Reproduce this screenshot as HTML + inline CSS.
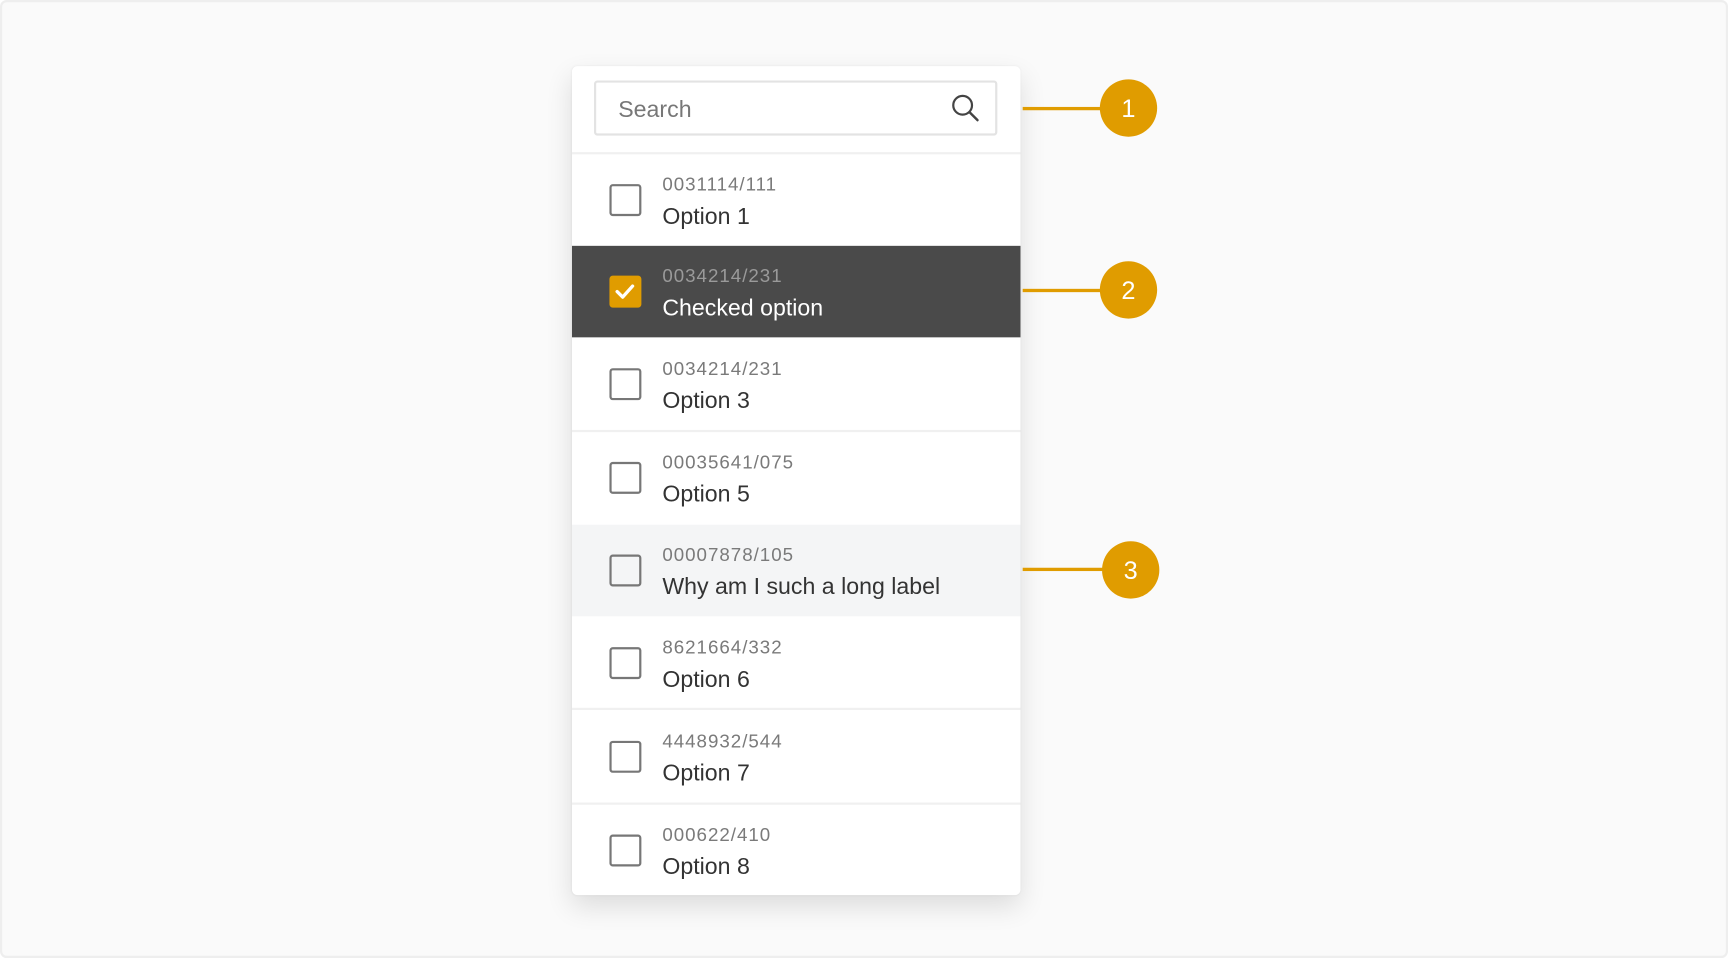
<!DOCTYPE html>
<html><head><meta charset="utf-8"><style>
html,body{margin:0;padding:0;width:1728px;height:958px;overflow:hidden;background:#fff}
#s{position:absolute;left:0;top:0;width:1568px;height:869px;transform:scale(1.10204,1.10242);transform-origin:0 0;font-family:"Liberation Sans",sans-serif}
.frame{position:absolute;left:0;top:0;width:1564px;height:865px;background:#fafafa;border:2px solid #eee;border-radius:6px}
.card{position:absolute;left:519px;top:60px;width:407px;height:752px;background:#fff;border-radius:5px;box-shadow:0 10px 24px rgba(0,0,0,.12),0 0 2px rgba(0,0,0,.06);overflow:hidden}
.search{position:absolute;left:20px;top:13px;width:362px;height:46px;border:2px solid #e3e3e3;border-radius:3px}
.search span{position:absolute;left:20px;top:13px;font-size:21px;color:#777}
.div{position:absolute;left:0;width:407px;height:2px;background:#f0f0f0}
.row{position:absolute;left:0;width:407px;height:83px}
.cb{position:absolute;left:34px;top:27px;width:25px;height:25px;border:2px solid #777;border-radius:3px}
.code{position:absolute;left:82px;top:18px;font-size:17px;color:#7a7a7a;white-space:nowrap;letter-spacing:0.9px}
.lab{position:absolute;left:82px;top:45px;font-size:21px;color:#333;white-space:nowrap}
.line{position:absolute;height:3px;background:#e09c00}
.dot{position:absolute;width:52px;height:52px;border-radius:50%;background:#e09c00;color:#fff;font-size:23px;text-align:center;line-height:52px}
</style></head><body><div id="s">
<div class="frame"></div>
<div class="card">
 <div class="search"><span>Search</span>
  <svg style="position:absolute;left:322px;top:10px" width="26" height="26" viewBox="0 0 26 26"><circle cx="10.5" cy="10.5" r="8.5" fill="none" stroke="#444" stroke-width="2"/><path d="M16.8 16.8L24 24" stroke="#444" stroke-width="2.2" stroke-linecap="round"/></svg>
 </div>
 <div class="div" style="top:78px"></div>
 <div class="row" style="top:80px"><div class="cb"></div><div class="code">0031114/111</div><div class="lab">Option 1</div></div>
 <div class="row" style="top:163px;background:#4a4a4a"><div class="cb" style="background:#e09c00;border-color:#e09c00"><svg width="25" height="25" viewBox="0 0 25 25"><path d="M5 12.5l5 5 9-10" fill="none" stroke="#fff" stroke-width="3" stroke-linecap="round" stroke-linejoin="round"/></svg></div><div class="code" style="color:#9a9a9a">0034214/231</div><div class="lab" style="color:#fff">Checked option</div></div>
 <div class="row" style="top:247px"><div class="cb"></div><div class="code">0034214/231</div><div class="lab">Option 3</div></div>
 <div class="div" style="top:330px"></div>
 <div class="row" style="top:332px"><div class="cb"></div><div class="code">00035641/075</div><div class="lab">Option 5</div></div>
 <div class="row" style="top:416px;background:#f4f5f6"><div class="cb"></div><div class="code">00007878/105</div><div class="lab">Why am I such a long label</div></div>
 <div class="row" style="top:500px"><div class="cb"></div><div class="code">8621664/332</div><div class="lab">Option 6</div></div>
 <div class="div" style="top:582px"></div>
 <div class="row" style="top:585px"><div class="cb"></div><div class="code">4448932/544</div><div class="lab">Option 7</div></div>
 <div class="div" style="top:668px"></div>
 <div class="row" style="top:670px"><div class="cb"></div><div class="code">000622/410</div><div class="lab">Option 8</div></div>
</div>
<div class="line" style="left:928px;top:97px;width:72px"></div><div class="dot" style="left:998px;top:72px">1</div>
<div class="line" style="left:928px;top:262px;width:72px"></div><div class="dot" style="left:998px;top:237px">2</div>
<div class="line" style="left:928px;top:515px;width:74px"></div><div class="dot" style="left:1000px;top:491px">3</div>
</div></body></html>
